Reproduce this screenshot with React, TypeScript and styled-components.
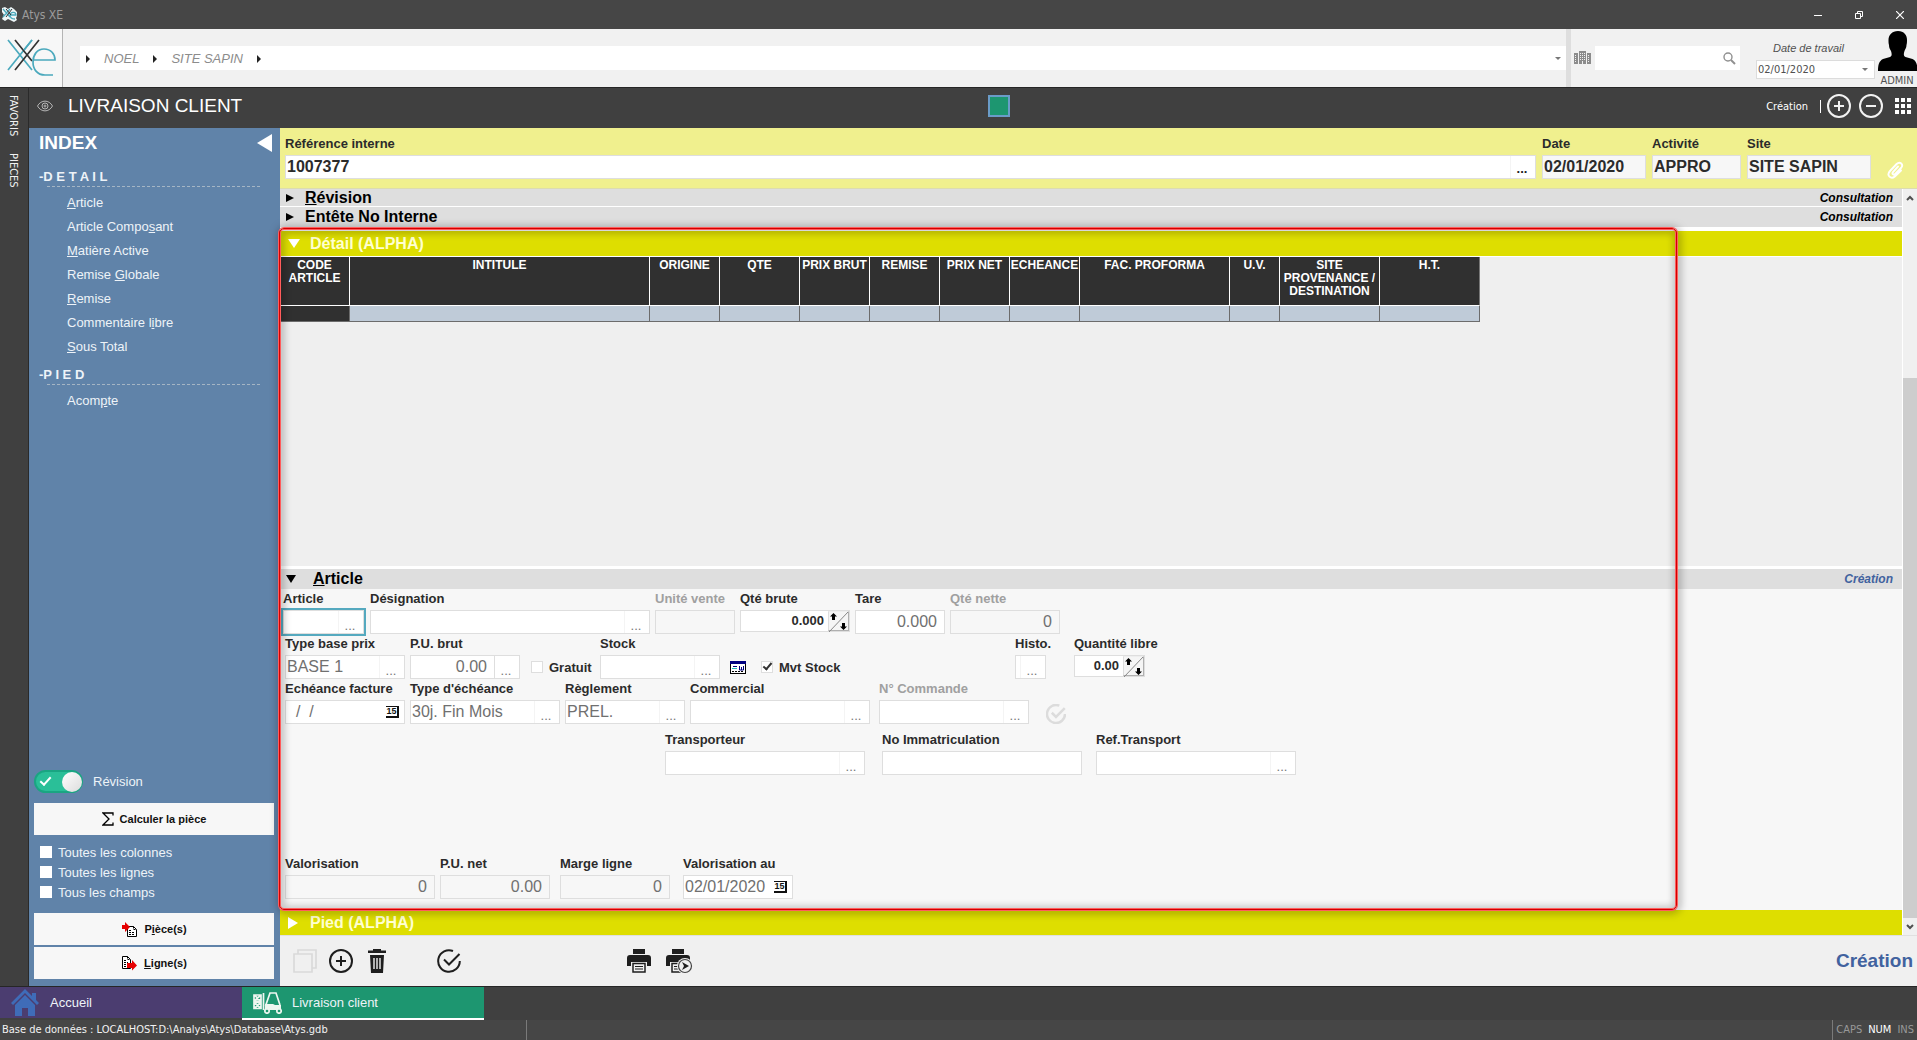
import React, { useId } from "react";
import styled, { createGlobalStyle, css } from "styled-components";

const sans = `"Liberation Sans", Arial, sans-serif`;
const ui = `"DejaVu Sans Condensed", "DejaVu Sans", Tahoma, sans-serif`;

const Global = createGlobalStyle`
  *, *::before, *::after { box-sizing: border-box; }
  body { margin: 0; background: #404040; font-family: ${sans}; font-size: 13px; color: #2b2b2b; }
  button, input, select { font: inherit; color: inherit; margin: 0; padding: 0; border: 0; background: none; border-radius: 0; outline: 0; }
  svg { display: block; flex: none; }
`;

const Shell = styled.div`
  display: flex;
  flex-direction: column;
  min-height: 100vh;
`;

/* ---------- window title ---------- */
const TitleBar = styled.header`
  display: flex;
  align-items: center;
  height: 29px;
  padding: 0 7px 0 2px;
  background: #464646;
  color: #9b9b9b;
  font: 12px ${ui};
`;
const AppName = styled.span`
  flex: 1;
  padding-left: 4px;
`;
const WindowButtons = styled.div`
  display: flex;
  gap: 21px;
`;
const IconButton = styled.button<{ $w?: number; $h?: number }>`
  display: flex;
  align-items: center;
  justify-content: center;
  width: ${(p) => p.$w ?? 24}px;
  height: ${(p) => p.$h ?? p.$w ?? 24}px;
  flex: none;
`;

/* ---------- top toolbar ---------- */
const TopBar = styled.div`
  display: flex;
  align-items: center;
  height: 58px;
  background: #f1f1f1;
`;
const LogoBox = styled.div`
  width: 63px;
  height: 58px;
  padding: 8px 0 0 6px;
  background: #f7f7f7;
  border-right: 1px solid #b4b4b4;
`;
const Crumbs = styled.nav`
  display: flex;
  align-items: center;
  flex: 1;
  height: 24px;
  margin-left: 17px;
  padding: 1px 4px 0 6px;
  gap: 14px;
  background: #fff;
  color: #8c8c8c;
  font-style: italic;
`;
const CrumbLink = styled.a`
  color: inherit;
  text-decoration: none;
`;
const Spacer = styled.span`
  flex: 1;
`;
const Arrow = styled.span<{ $dir: "right" | "down" | "left"; $size: number; $long: number; $color: string }>`
  flex: none;
  width: 0;
  height: 0;
  ${(p) =>
    p.$dir === "down"
      ? css`
          border-left: ${p.$size}px solid transparent;
          border-right: ${p.$size}px solid transparent;
          border-top: ${p.$long}px solid ${p.$color};
        `
      : css`
          border-top: ${p.$size}px solid transparent;
          border-bottom: ${p.$size}px solid transparent;
          ${p.$dir === "right" ? "border-left" : "border-right"}: ${p.$long}px solid ${p.$color};
        `}
`;
const TopDivider = styled.div`
  width: 5px;
  height: 58px;
  background: #dedede;
`;
const SearchBox = styled.div`
  display: flex;
  align-items: center;
  width: 145px;
  height: 24px;
  margin-left: 2px;
  padding-right: 4px;
  background: #fff;
`;
const PlainInput = styled.input`
  flex: 1;
  min-width: 0;
  height: 100%;
`;
const WorkDate = styled.div`
  display: flex;
  flex-direction: column;
  width: 119px;
  margin-left: 16px;
`;
const WorkDateLabel = styled.label`
  padding: 2px 14px 0 0;
  color: #505050;
  font-size: 11px;
  font-style: italic;
  line-height: 16px;
  text-align: center;
`;
const SelectWrap = styled.span`
  display: grid;
  grid-template-columns: 1fr 12px;
  align-items: center;
  height: 19px;
  margin-top: 4px;
  background: #fff;
  border: 1px solid #dcdcdc;
`;
const DateSelect = styled.select`
  grid-area: 1 / 1 / 2 / 3;
  appearance: none;
  height: 17px;
  padding-left: 1px;
  color: #505050;
  font: 11px ${ui};
`;
const SelectArrow = styled(Arrow)`
  grid-area: 1 / 2;
`;
const UserBox = styled.button`
  display: flex;
  flex-direction: column;
  align-items: center;
  width: 40px;
  height: 58px;
  margin-left: 2px;
  padding-top: 2px;
  color: #505050;
  font: 11px/14px ${ui};
`;
const UserName = styled.span`
  padding-top: 3px;
`;

/* ---------- body ---------- */
const Body = styled.div`
  display: flex;
  flex: 1;
`;
const Rail = styled.nav`
  display: flex;
  flex-direction: column;
  gap: 17px;
  width: 29px;
  padding: 7px 0 0 6px;
  background: #404040;
  border-top: 1px solid #262626;
  border-right: 1px solid #2a2a2a;
`;
const RailButton = styled.button`
  width: 14px;
  color: #f2f2f2;
  font: 11px/14px ${ui};
  writing-mode: vertical-rl;
  text-align: left;
`;
const Column = styled.div`
  display: flex;
  flex-direction: column;
  flex: 1;
  min-width: 0;
`;
const PageHead = styled.div`
  display: grid;
  grid-template-columns: 1fr auto 1fr;
  align-items: center;
  height: 41px;
  padding: 0 6px 4px 8px;
  background: #404040;
  border-top: 1px solid #262626;
  color: #fff;
`;
const PageTitle = styled.h1`
  display: flex;
  align-items: center;
  gap: 15px;
  margin: 0;
  font-size: 19px;
  font-weight: 400;
`;
const ColorChip = styled.button`
  width: 22px;
  height: 22px;
  margin-left: 50px;
  background: #1d9670;
  border: 2px solid #6a9cc8;
`;
const PageActions = styled.div`
  display: flex;
  align-items: center;
  justify-content: flex-end;
  font: 11px ${ui};
`;
const Bar = styled.span`
  width: 1px;
  height: 13px;
  margin: 0 6px 0 12px;
  background: #fff;
`;
const RoundGroup = styled.div`
  display: flex;
  gap: 8px;
  padding-right: 12px;
`;
const Work = styled.div`
  display: flex;
  flex: 1;
`;

/* ---------- index panel ---------- */
const Side = styled.aside`
  display: flex;
  flex-direction: column;
  width: 251px;
  padding: 5px 6px 7px 5px;
  background: #6083a9;
  color: #eef3f8;
`;
const SideTitle = styled.div`
  display: flex;
  align-items: center;
  justify-content: space-between;
  height: 20px;
  padding: 0 2px 0 5px;
`;
const SideHeading = styled.h2`
  margin: 0;
  color: #fff;
  font-size: 19px;
`;
const Group = styled.section`
  padding: 8px 14px 0 5px;
  &:first-of-type { padding-top: 16px; }
`;
const GroupTitle = styled.h3`
  height: 18px;
  margin: 0 0 0 8px;
  border-bottom: 1px dashed #a5b5c4;
  font-size: 13px;
  line-height: 15px;
  text-indent: -8px;
  white-space: nowrap;
`;
const Links = styled.ul`
  margin: 0;
  padding: 4px 0 0 28px;
  list-style: none;
`;
const IndexLink = styled.a`
  display: block;
  color: inherit;
  line-height: 24px;
  text-decoration: none;
`;
const SideOptions = styled.div`
  display: flex;
  flex-direction: column;
  margin-top: auto;
`;
const ToggleLabel = styled.label`
  display: flex;
  align-items: center;
  gap: 10px;
  margin-bottom: 10px;
`;
const Toggle = styled.input.attrs({ type: "checkbox" })`
  position: relative;
  appearance: none;
  width: 49px;
  height: 23px;
  background: #2abf98;
  border: 2px solid #1aa582;
  border-radius: 12px;
  &::before {
    content: "";
    position: absolute;
    top: 0;
    right: -1px;
    width: 20px;
    height: 20px;
    border-radius: 50%;
    background: linear-gradient(135deg, #ffffff, #dcdcdc);
  }
  &::after {
    content: "";
    position: absolute;
    left: 4px;
    top: 5px;
    width: 11px;
    height: 6px;
    border: solid #fff;
    border-width: 0 0 2px 2px;
    rotate: -48deg;
  }
`;
const SideButton = styled.button`
  display: flex;
  align-items: center;
  justify-content: center;
  gap: 6px;
  height: 32px;
  background: #f7f7f7;
  color: #111;
  font-size: 11px;
  font-weight: 700;
  & + & { margin-top: 2px; }
`;
const Checks = styled.div`
  padding: 7px 0 11px 6px;
`;
const CheckLine = styled.label<{ $bold?: boolean }>`
  display: flex;
  align-items: center;
  gap: 6px;
  height: 20px;
  font-weight: ${(p) => (p.$bold ? 700 : 400)};
`;
const Check = styled.input.attrs({ type: "checkbox" })<{ $line?: string }>`
  position: relative;
  appearance: none;
  width: 12px;
  height: 12px;
  background: #fff;
  border: 1px solid ${(p) => p.$line ?? "#fff"};
  &:checked::after {
    content: "";
    position: absolute;
    left: 1px;
    top: 1px;
    width: 9px;
    height: 5px;
    border: solid #333;
    border-width: 0 0 2px 2px;
    rotate: -50deg;
  }
`;

/* ---------- document ---------- */
const Doc = styled.main`
  display: flex;
  flex-direction: column;
  flex: 1;
  min-width: 0;
  background: #f0f0f0;
`;
const KeyBar = styled.div`
  display: flex;
  align-items: flex-end;
  gap: 6px;
  height: 61px;
  padding: 0 12px 9px 5px;
  background: #f0f08e;
  border-bottom: 1px solid #dcdcb0;
`;
const Clip = styled.div`
  margin-left: 9px;
`;

const FieldWrap = styled.div<{ $w?: number; $before?: number }>`
  ${(p) => (p.$w ? `width: ${p.$w}px; flex: none;` : "flex: 1;")}
  margin-left: ${(p) => p.$before ?? 0}px;
`;
const FieldLabel = styled.label<{ $off?: boolean }>`
  display: block;
  height: 21px;
  line-height: 20px;
  font-weight: 700;
  white-space: nowrap;
  color: ${(p) => (p.$off ? "#a0a0a0" : "#2b2b2b")};
`;
const Box = styled.div<{ $grey?: boolean; $focus?: boolean; $h?: number }>`
  display: flex;
  height: ${(p) => p.$h ?? 24}px;
  background: ${(p) => (p.$grey ? "#f7f7f7" : "#fff")};
  border: 1px solid #dedede;
  ${(p) => p.$focus && "box-shadow: 0 0 0 2px #55a9bf;"}
`;
const Value = styled.input<{ $num?: boolean; $strong?: "key" | "spin" }>`
  flex: 1;
  min-width: 0;
  height: 100%;
  padding: 0 ${(p) => (p.$strong === "spin" ? 4 : p.$num ? 7 : 0)}px 1px 1px;
  color: ${(p) => (p.$strong ? "#2b2b2b" : "#707070")};
  font-size: ${(p) => (p.$strong === "spin" ? 13 : 16)}px;
  font-weight: ${(p) => (p.$strong ? 700 : 400)};
  text-align: ${(p) => (p.$num ? "right" : "left")};
`;
const More = styled.button<{ $line?: string; $strong?: boolean }>`
  width: 25px;
  height: 100%;
  flex: none;
  padding: ${(p) => (p.$strong ? 4 : 7)}px 2px 0 0;
  border-left: 1px solid ${(p) => p.$line ?? "#f4f4f4"};
  color: ${(p) => (p.$strong ? "#222" : "#777")};
  font-size: 13px;
  font-weight: ${(p) => (p.$strong ? 700 : 400)};
  line-height: 14px;
  text-align: center;
`;
const DayButton = styled.button`
  display: flex;
  align-items: center;
  justify-content: center;
  width: 23px;
  flex: none;
`;
const DayIcon = styled.span`
  width: 13px;
  height: 12px;
  border: solid #111;
  border-width: 1px 2px 2px 0;
  background: #fff;
  color: #111;
  font: 700 9px/9px ${sans};
  text-align: center;
`;
const SpinButton = styled.button`
  display: flex;
  width: 21px;
  flex: none;
  background: #f5f5f5;
  border: 1px solid #b0b0b0;
  border-top-color: #eee;
  border-left-color: #ddd;
`;

const Scroller = styled.div`
  display: flex;
  flex: 1;
`;
const Sheet = styled.div`
  display: flex;
  flex-direction: column;
  flex: 1;
  min-width: 0;
  background: #fff;
`;
const GreyBar = styled.div<{ $first?: boolean }>`
  display: flex;
  align-items: center;
  height: ${(p) => (p.$first ? 18 : 20)}px;
  padding: 0 9px 0 6px;
  background: #dedede;
  border-bottom: ${(p) => (p.$first ? "1px solid #fff" : "0")};
`;
const BarToggle = styled.button<{ $gap: number }>`
  display: flex;
  align-items: center;
  gap: ${(p) => p.$gap}px;
  color: #000;
  font-size: 16px;
  font-weight: 700;
  line-height: 18px;
`;
const BarState = styled.span<{ $color?: string }>`
  margin-left: auto;
  color: ${(p) => p.$color ?? "#000"};
  font-size: 12px;
  font-style: italic;
  font-weight: 700;
  line-height: 16px;
`;
const YellowBar = styled.button`
  display: flex;
  align-items: center;
  width: 100%;
  height: 25px;
  padding-left: 8px;
  background: #dede00;
  color: #ffffd0;
  font-size: 16px;
  font-weight: 700;
`;
const ArrowSlot = styled.span`
  display: flex;
  width: 22px;
`;
const Marked = styled.div`
  position: relative;
  display: flex;
  flex-direction: column;
  flex: 1;
  margin-top: 4px;
`;
const RedFrame = styled.div`
  position: absolute;
  inset: -3px 225px 0 -1px;
  z-index: 2;
  border: 1px solid #d00000;
  border-radius: 5px;
  box-shadow: 0 0 0 1px #ff5c5c, inset 0 0 0 1px #ff5c5c;
  filter: drop-shadow(1px 1px 4px rgba(0, 0, 0, 0.6));
  pointer-events: none;
`;
const GridArea = styled.div`
  flex: 1;
  background: #efefef;
  border-top: 1px solid #fff;
  border-bottom: 3px solid #fff;
`;
const Lines = styled.table`
  width: 1200px;
  table-layout: fixed;
  border-collapse: separate;
  border-spacing: 0;
`;
const Th = styled.th`
  height: 49px;
  padding: 2px 0 0;
  vertical-align: top;
  background: #303030;
  border-right: 1px solid #fff;
  border-bottom: 1px solid #fff;
  color: #fff;
  font-size: 12px;
  line-height: 13px;
  &:last-child { border-right-color: #777; }
`;
const Td = styled.td`
  height: 16px;
  padding: 0;
  background: #bfcbd8;
  border-right: 1px solid #6c6c6c;
  border-bottom: 1px solid #6c6c6c;
  &:first-child { background: #303030; }
`;
const Form = styled.form`
  padding-bottom: 11px;
  background: #f7f7f7;
`;
const Row = styled.div<{ $pad?: number; $top?: number }>`
  display: flex;
  align-items: flex-start;
  padding-left: ${(p) => p.$pad ?? 5}px;
  padding-top: ${(p) => p.$top ?? 0}px;
`;
const Inline = styled.div<{ $before: number; $w?: number; $low?: boolean }>`
  margin-left: ${(p) => p.$before}px;
  ${(p) => p.$w && `width: ${p.$w}px;`}
  height: 45px;
  padding-top: 21px;
  display: flex;
  align-items: ${(p) => (p.$low ? "flex-end" : "center")};
`;
const ScrollTrack = styled.div`
  display: flex;
  flex-direction: column;
  align-items: center;
  width: 15px;
  background: #f0f0f0;
  border-left: 1px solid #fff;
`;
const ScrollThumb = styled.div`
  width: 14px;
  flex: 540;
  background: #cdcdcd;
`;
const ScrollGap = styled.div`
  flex: 171;
`;

const Actions = styled.footer`
  display: flex;
  align-items: center;
  gap: 12px;
  height: 51px;
  padding: 0 4px 0 13px;
  border-top: 1px solid #e0e0e0;
`;
const ActionSet = styled.div<{ $before: number; $gap: number }>`
  display: flex;
  gap: ${(p) => p.$gap}px;
  margin-left: ${(p) => p.$before}px;
`;
const Mode = styled.strong`
  margin-left: auto;
  color: #41629f;
  font-size: 19px;
`;

/* ---------- bottom ---------- */
const TaskBar = styled.nav`
  display: flex;
  height: 34px;
  background: #404040;
  border-top: 1px solid #262626;
`;
const Task = styled.button<{ $color: string; $line: string; $gap: number }>`
  display: flex;
  align-items: center;
  gap: ${(p) => p.$gap}px;
  width: 242px;
  padding-left: 11px;
  background: ${(p) => p.$color};
  border-bottom: 2px solid ${(p) => p.$line};
  color: #eef3f8;
`;
const Status = styled.footer`
  display: flex;
  height: 20px;
  background: #464646;
  color: #f2f2f2;
  font: 11px/20px ${ui};
`;
const StatusText = styled.span`
  width: 527px;
  padding-left: 2px;
  border-right: 1px solid #7a7a7a;
`;
const Keys = styled.span`
  display: flex;
  gap: 6px;
  margin-left: auto;
  padding: 0 3px;
  border-left: 1px solid #7a7a7a;
`;
const Key = styled.span<{ $on?: boolean }>`
  color: ${(p) => (p.$on ? "#fff" : "#999")};
`;

/* ---------- icons ---------- */
const XeLogo = () => (
  <svg width="52" height="42" viewBox="0 0 52 42" fill="none" strokeWidth="1.700">
    <path d="M2 3l24 30M26 3L2 33" stroke="#4ba9bd" />
    <path d="M9 3l17 21M33 3L9 33" stroke="#333" />
    <path d="M26 3l-8 10" stroke="#4ba9bd" />
    <path d="M27 23h22c0-6-4-11-11-11s-11 6-11 13 4 13 12 13h8" stroke="#4ba9bd" />
  </svg>
);
const TinyLogo = () => (
  <svg width="16" height="15" viewBox="0 0 16 15">
    <path d="M0 1l3-1 3 2 3-2 3 2 3 3v4l-1 2 1 2-3 2-4-2-2-1-3 2-3-2 2-4-2-3z" fill="#eef6f8" />
    <path d="M1 2l7 8M8 2L1 10M8 8h6c0-3-5-4-6 0 0 4 3 4 5 4" stroke="#4ba9bd" strokeWidth="1.3" fill="none" />
    <path d="M4 2l5 6M10 2L4 10" stroke="#333" fill="none" />
  </svg>
);
const Buildings = () => (
  <svg width="17" height="14" viewBox="0 0 17 14" fill="#8c8c8c">
    <path fillRule="evenodd" d="M0 2h4v11H0zM5 0h7v13H5zM13 2h4v11h-4zM1 4v1h1V4zm0 2v1h1V6zm0 2v1h1V8zm0 2v1h1v-1zM6 2v1h1V2zm2 0v1h1V2zm2 0v1h1V2zM6 4v1h1V4zm2 0v1h1V4zm2 0v1h1V4zM6 6v1h1V6zm2 0v1h1V6zm2 0v1h1V6zM6 8v1h1V8zm2 0v1h1V8zm2 0v1h1V8zm-2 2v3h1v-3zm6-6v1h1V4zm0 2v1h1V6zm0 2v1h1V8zm0 2v1h1v-1z" />
  </svg>
);
const Magnifier = () => (
  <svg width="13" height="13" viewBox="0 0 13 13" fill="none" stroke="#909090">
    <circle cx="5" cy="5" r="4" strokeWidth="1.4" />
    <path d="M8 8l4 4" strokeWidth="2" />
  </svg>
);
const Person = () => (
  <svg width="39" height="40" viewBox="0 0 39 40">
    <path d="M20 0c6 0 9 4 9 9 0 2 0 3-.5 5 0 3-1.500 4-2 6-1 3-1 5 1 6l7 2c4 2 5 6 5 12H0c0-6 1-10 5-12l7-2c2-1 2-3 1-6-1-2-2-3-2-6-.5-2-.5-3-.5-5 0-5 3.500-9 9.500-9z" />
  </svg>
);
const Eye = () => (
  <svg width="16" height="12" viewBox="0 0 16 12" fill="none" stroke="#b5b5b5">
    <path d="M.5 6C4-.5 12-.5 15.500 6 12 12.500 4 12.500.5 6z" />
    <circle cx="8" cy="6" r="3" />
    <circle cx="8" cy="6" r="1" />
  </svg>
);
const Circled = ({ plus, color }: { plus?: boolean; color: string }) => (
  <svg width="24" height="24" viewBox="0 0 24 24" fill="none" stroke={color} strokeWidth="2">
    <circle cx="12" cy="12" r="11" />
    <path d={plus ? "M7 12h10M12 7v10" : "M7 12h10"} />
  </svg>
);
const NineDots = () => (
  <svg width="16" height="16" viewBox="0 0 16 16" fill="#fff">
    {[0, 6, 12].map((y) => [0, 6, 12].map((x) => <rect key={`${x}-${y}`} x={x} y={y} width="4" height="4" />))}
  </svg>
);
const Paperclip = () => (
  <svg width="17" height="18" viewBox="0 0 17 18" fill="none" stroke="#fff" strokeWidth="1.900" strokeLinecap="round">
    <path d="M11 5.500l-5 5.500c-1.500 2 .7 3.500 2.200 2l5.800-6c3-3.500-1-7.200-4.400-4L3 10c-4 4.500 1 8.800 4.800 5.500l6.200-6" />
  </svg>
);
const Sigma = () => (
  <svg width="12" height="14" viewBox="0 0 12 14" fill="none" stroke="#000" strokeWidth="1.300">
    <path d="M11 3.500V1H1l6 6-6 6h10v-2.500" />
  </svg>
);
const PieceIcon = () => (
  <svg width="17" height="15" viewBox="0 0 17 15">
    <path d="M6.500 4.500h6l3 3v7h-9z" fill="#fff" stroke="#000" />
    <path d="M12.500 4.500v3h3M8 8.500h3M8 10.500h6M8 12.500h6" stroke="#000" fill="none" strokeDasharray="2 1" />
    <path d="M1 3h3V0l5 5-5 5V7H1z" fill="#e60000" />
  </svg>
);
const LineIcon = () => (
  <svg width="17" height="15" viewBox="0 0 17 15">
    <path d="M1.500.5h5l3 3v9h-8z" fill="#fff" stroke="#000" />
    <path d="M6.500.5v3h3M3 4.500h2M3 6.500h4M3 8.500h3M3 10.500h3" stroke="#000" fill="none" strokeDasharray="2 1" />
    <path d="M6 7h5V4l5 5.500-5 5V12H6z" fill="#e60000" />
  </svg>
);
const Spin = () => (
  <svg width="19" height="20" viewBox="0 0 19 20">
    <path d="M0 20L19 0" stroke="#888" />
    <path d="M4.500 1L8 4.500H6V8H3V4.500H1zM14.500 18L11 14.500h2V11h3v3.500h2z" fill="#000" />
  </svg>
);
const StockCard = () => (
  <svg width="16" height="13" viewBox="0 0 16 13">
    <rect x=".5" y=".5" width="15" height="12" fill="#fff" stroke="#000" />
    <path d="M0 0h16v3H0z" fill="#000080" />
    <path d="M3 5.500h4M9.500 5v4h4V5M11.500 6v3" stroke="#000080" fill="none" />
    <path d="M2 7.500h5" stroke="#2bb" />
    <path d="M2 10.500h12" stroke="#000" strokeDasharray="2 1" />
  </svg>
);
const CheckCircle = ({ size, color, width }: { size: number; color: string; width: number }) => (
  <svg width={size} height={size} viewBox="0 0 24 24" fill="none" stroke={color} strokeWidth={width}>
    <path d="M16 2A10.800 10.800 0 1 0 22.800 12" />
    <path d="M7 10.500l5 5L22.500 5" />
  </svg>
);
const CopyIcon = () => (
  <svg width="24" height="24" viewBox="0 0 24 24" fill="none" stroke="#d9d9d9" strokeWidth="1.600">
    <path d="M1 5h18v18H1zM5 5V1h18v18h-4" />
  </svg>
);
const Trash = () => (
  <svg width="18" height="24" viewBox="0 0 18 24" fill="#1e1e1e">
    <path d="M0 1.500h5V0h8v1.500h5V4H0zM2 6h14l-1 18H3z" />
    <path d="M6 9v11M9 9v11M12 9v11" stroke="#f0f0f0" strokeWidth="1.400" />
  </svg>
);
const Printer = ({ next }: { next?: boolean }) => (
  <svg width={next ? 27 : 24} height="26" viewBox={next ? "0 0 27 26" : "0 0 24 26"}>
    <path d="M6 1h12v5H6zM0 10q0-3 3-3h18q3 0 3 3v8h-4v-4H4v4H0z" fill="#1e1e1e" />
    <path d="M6 15.500h12V24H6z" fill="#f0f0f0" stroke="#1e1e1e" strokeWidth="1.500" />
    <path d="M8 18.500h8M8 21h8" stroke="#1e1e1e" />
    {next && <circle cx="19" cy="18" r="8" fill="#f0f0f0" />}
    {next && <circle cx="19" cy="18" r="6.500" fill="#f0f0f0" stroke="#444" strokeWidth="1.200" />}
    {next && <path d="M16 14l7 4-7 4 2-4z" fill="#1e1e1e" />}
  </svg>
);
const House = () => (
  <svg width="28" height="27" viewBox="0 0 28 27" fill="#3f6cb8">
    <path d="M14 0L0 14l2 2L14 4l12 12 2-2-3-3V4h-4v3z" />
    <path d="M14 6L4 16v11h7v-8h6v8h7V16z" />
  </svg>
);
const Forklift = () => (
  <svg width="29" height="22" viewBox="0 0 29 22" fill="none" stroke="#eef6f0" strokeWidth="1.700">
    <path d="M1 3h7v6H1zM1 10.500h7v6H1zM1 3l7 6M8 3L1 9M1 10.500l7 6M8 10.500l-7 6M10.500 1v17" />
    <path d="M12.500 14L17 1h6l4 12" />
    <path d="M12 12h8l2 1h6v5H12z" fill="#eef6f0" stroke="none" />
    <circle cx="14" cy="19" r="2.200" fill="#1d9670" />
    <circle cx="26" cy="19" r="2.200" fill="#1d9670" />
  </svg>
);
const Chevron = ({ up }: { up?: boolean }) => (
  <svg width="8" height="6" viewBox="0 0 8 6" fill="none" stroke="#505050" strokeWidth="2">
    <path d={up ? "M1 5l3-3 3 3" : "M1 1l3 3 3-3"} />
  </svg>
);

/* ---------- parts ---------- */
// "&" marks the letter that is the keyboard shortcut.
const Mnemonic = ({ text }: { text: string }) => {
  const at = text.indexOf("&");
  if (at < 0) return <span>{text}</span>;
  return (
    <span>
      {text.slice(0, at)}
      <u>{text[at + 1]}</u>
      {text.slice(at + 2)}
    </span>
  );
};

type FieldProps = {
  label: string;
  w?: number;
  before?: number;
  value?: string;
  num?: boolean;
  off?: boolean;
  grey?: boolean;
  focus?: boolean;
  big?: boolean;
  tool?: "more" | "split" | "day" | "spin" | "only";
};
const Field = ({ label, w, before, value = "", num, off, grey, focus, big, tool }: FieldProps) => {
  const id = useId();
  return (
    <FieldWrap $w={w} $before={before}>
      <FieldLabel htmlFor={id} $off={off}>
        {label}
      </FieldLabel>
      <Box $grey={grey} $focus={focus} $h={tool === "spin" ? 22 : 24}>
        {tool !== "only" && (
          <Value id={id} defaultValue={value} $num={num || tool === "spin"} $strong={big ? "key" : tool === "spin" ? "spin" : undefined} />
        )}
        {tool === "only" && <Spacer />}
        {(tool === "more" || tool === "split" || tool === "only") && (
          <More
            type="button"
            id={tool === "only" ? id : undefined}
            aria-label={`Choisir ${label}`}
            $strong={big}
            $line={tool === "split" ? "#dedede" : undefined}
          >
            ...
          </More>
        )}
        {tool === "day" && (
          <DayButton type="button" aria-label={`Calendrier ${label}`}>
            <DayIcon>15</DayIcon>
          </DayButton>
        )}
        {tool === "spin" && (
          <SpinButton type="button" aria-label={`Ajuster ${label}`}>
            <Spin />
          </SpinButton>
        )}
      </Box>
    </FieldWrap>
  );
};

const groups = [
  {
    title: "D E T A I L",
    items: ["&Article", "Article Compo&sant", "&Matière Active", "Remise &Globale", "&Remise", "Commentaire l&ibre", "&Sous Total"],
  },
  { title: "P I E D", items: ["Acom&pte"] },
];

const columns: [string, number][] = [
  ["CODE ARTICLE", 70],
  ["INTITULE", 300],
  ["ORIGINE", 70],
  ["QTE", 80],
  ["PRIX BRUT", 70],
  ["REMISE", 70],
  ["PRIX NET", 70],
  ["ECHEANCE", 70],
  ["FAC. PROFORMA", 150],
  ["U.V.", 50],
  ["SITE PROVENANCE / DESTINATION", 100],
  ["H.T.", 100],
];

const IndexPanel = () => (
  <Side>
    <SideTitle>
      <SideHeading>INDEX</SideHeading>
      <IconButton $w={15} $h={18} aria-label="Replier l'index">
        <Arrow $dir="left" $size={9} $long={15} $color="#fff" />
      </IconButton>
    </SideTitle>
    {groups.map((g) => (
      <Group key={g.title}>
        <GroupTitle>-{g.title}</GroupTitle>
        <Links>
          {g.items.map((item) => (
            <li key={item}>
              <IndexLink href="#">
                <Mnemonic text={item} />
              </IndexLink>
            </li>
          ))}
        </Links>
      </Group>
    ))}
    <SideOptions>
      <ToggleLabel>
        <Toggle defaultChecked />
        Révision
      </ToggleLabel>
      <SideButton>
        <Sigma />
        Calculer la pièce
      </SideButton>
      <Checks>
        {["Toutes les colonnes", "Toutes les lignes", "Tous les champs"].map((t) => (
          <CheckLine key={t}>
            <Check />
            {t}
          </CheckLine>
        ))}
      </Checks>
      <SideButton>
        <PieceIcon />
        <Mnemonic text="P&ièce(s)" />
      </SideButton>
      <SideButton>
        <LineIcon />
        <Mnemonic text="&Ligne(s)" />
      </SideButton>
    </SideOptions>
  </Side>
);

const ArticleForm = () => (
  <Form>
    <Row $pad={3}>
      <Field label="Article" w={81} focus tool="more" />
      <Field label="Désignation" w={280} before={6} tool="more" />
      <Field label="Unité vente" w={80} before={5} off grey />
      <Field label="Qté brute" w={110} before={5} value="0.000" tool="spin" />
      <Field label="Tare" w={90} before={5} value="0.000" num />
      <Field label="Qté nette" w={110} before={5} value="0" num off grey />
    </Row>
    <Row>
      <Field label="Type base prix" w={120} value="BASE 1" tool="more" />
      <Field label="P.U. brut" w={110} before={5} value="0.00" num tool="split" />
      <Inline $before={11} $w={69}>
        <CheckLine $bold>
          <Check $line="#dedede" />
          Gratuit
        </CheckLine>
      </Inline>
      <Field label="Stock" w={120} tool="more" />
      <Inline $before={10} $w={31}>
        <IconButton type="button" $w={16} aria-label="Fiche stock">
          <StockCard />
        </IconButton>
      </Inline>
      <Inline $before={0} $w={244}>
        <CheckLine $bold>
          <Check $line="#dedede" defaultChecked />
          Mvt Stock
        </CheckLine>
      </Inline>
      <Field label="Histo." w={31} before={10} tool="only" />
      <Field label="Quantité libre" w={71} before={28} value="0.00" tool="spin" />
    </Row>
    <Row>
      <Field label="Echéance facture" w={120} value="  /  /" tool="day" />
      <Field label="Type d'échéance" w={150} before={5} value="30j. Fin Mois" tool="more" />
      <Field label="Règlement" w={120} before={5} value="PREL." tool="more" />
      <Field label="Commercial" w={180} before={5} tool="more" />
      <Field label="N° Commande" w={150} before={9} off tool="more" />
      <Inline $before={17} $low>
        <IconButton type="button" $w={20} aria-label="Valider la commande">
          <CheckCircle size={20} color="#dcdcdc" width={3} />
        </IconButton>
      </Inline>
    </Row>
    <Row $pad={385} $top={6}>
      <Field label="Transporteur" w={200} tool="more" />
      <Field label="No Immatriculation" w={200} before={17} />
      <Field label="Ref.Transport" w={200} before={14} tool="more" />
    </Row>
    <Row $top={79}>
      <Field label="Valorisation" w={150} value="0" num grey />
      <Field label="P.U. net" w={110} before={5} value="0.00" num grey />
      <Field label="Marge ligne" w={110} before={10} value="0" num grey />
      <Field label="Valorisation au" w={110} before={13} value="02/01/2020" tool="day" />
    </Row>
  </Form>
);

export default function App() {
  return (
    <Shell>
      <Global />
      <TitleBar>
        <TinyLogo />
        <AppName>Atys XE</AppName>
        <WindowButtons>
          <IconButton $w={20} aria-label="Réduire">
            <svg width="8" height="8" viewBox="0 0 8 8" stroke="#fff"><path d="M0 4.500h8" /></svg>
          </IconButton>
          <IconButton $w={20} aria-label="Restaurer">
            <svg width="8" height="8" viewBox="0 0 8 8" stroke="#fff" fill="none"><path d="M.5 2.500h5v5h-5zM2.500 2.500v-2h5v5h-2" /></svg>
          </IconButton>
          <IconButton $w={20} aria-label="Fermer">
            <svg width="8" height="8" viewBox="0 0 8 8" stroke="#fff" strokeWidth="1.200"><path d="M0 0l8 8M8 0L0 8" /></svg>
          </IconButton>
        </WindowButtons>
      </TitleBar>

      <TopBar>
        <LogoBox>
          <XeLogo />
        </LogoBox>
        <Crumbs>
          <Arrow $dir="right" $size={4} $long={4} $color="#222" />
          <CrumbLink href="#">NOEL</CrumbLink>
          <Arrow $dir="right" $size={4} $long={4} $color="#222" />
          <CrumbLink href="#">SITE SAPIN</CrumbLink>
          <Arrow $dir="right" $size={4} $long={4} $color="#222" />
          <Spacer />
          <IconButton $w={8} $h={20} aria-label="Historique">
            <Arrow $dir="down" $size={3} $long={3} $color="#777" />
          </IconButton>
        </Crumbs>
        <TopDivider />
        <IconButton $w={22} aria-label="Sites">
          <Buildings />
        </IconButton>
        <SearchBox>
          <PlainInput aria-label="Rechercher" />
          <Magnifier />
        </SearchBox>
        <WorkDate>
          <WorkDateLabel htmlFor="work-date">Date de travail</WorkDateLabel>
          <SelectWrap>
            <DateSelect id="work-date">
              <option>02/01/2020</option>
            </DateSelect>
            <SelectArrow $dir="down" $size={3} $long={3} $color="#777" />
          </SelectWrap>
        </WorkDate>
        <UserBox>
          <Person />
          <UserName>ADMIN</UserName>
        </UserBox>
      </TopBar>

      <Body>
        <Rail>
          <RailButton>FAVORIS</RailButton>
          <RailButton>PIECES</RailButton>
        </Rail>
        <Column>
          <PageHead>
            <PageTitle>
              <Eye />
              LIVRAISON CLIENT
            </PageTitle>
            <ColorChip aria-label="Couleur de la pièce" />
            <PageActions>
              Création
              <Bar />
              <RoundGroup>
                <IconButton aria-label="Ajouter">
                  <Circled plus color="#f2f2f2" />
                </IconButton>
                <IconButton aria-label="Retirer">
                  <Circled color="#f2f2f2" />
                </IconButton>
              </RoundGroup>
              <IconButton $w={16} aria-label="Applications">
                <NineDots />
              </IconButton>
            </PageActions>
          </PageHead>

          <Work>
            <IndexPanel />
            <Doc>
              <KeyBar>
                <Field label="Référence interne" value="1007377" big tool="more" />
                <Field label="Date" w={104} value="02/01/2020" big grey />
                <Field label="Activité" w={89} value="APPRO" big grey />
                <Field label="Site" w={124} value="SITE SAPIN" big grey />
                <Clip>
                  <IconButton $w={19} aria-label="Pièces jointes">
                    <Paperclip />
                  </IconButton>
                </Clip>
              </KeyBar>

              <Scroller>
                <Sheet>
                  <GreyBar $first>
                    <BarToggle $gap={11}>
                      <Arrow $dir="right" $size={4} $long={8} $color="#000" />
                      <Mnemonic text="&Révision" />
                    </BarToggle>
                    <BarState>Consultation</BarState>
                  </GreyBar>
                  <GreyBar>
                    <BarToggle $gap={11}>
                      <Arrow $dir="right" $size={4} $long={8} $color="#000" />
                      Entête No Interne
                    </BarToggle>
                    <BarState>Consultation</BarState>
                  </GreyBar>
                  <Marked>
                    <RedFrame />
                    <YellowBar>
                      <ArrowSlot>
                        <Arrow $dir="down" $size={6} $long={9} $color="#fff" />
                      </ArrowSlot>
                      Détail (ALPHA)
                    </YellowBar>
                    <GridArea>
                      <Lines>
                        <colgroup>
                          {columns.map(([name, w]) => (
                            <col key={name} width={w} />
                          ))}
                        </colgroup>
                        <thead>
                          <tr>
                            {columns.map(([name]) => (
                              <Th key={name}>{name}</Th>
                            ))}
                          </tr>
                        </thead>
                        <tbody>
                          <tr>
                            {columns.map(([name]) => (
                              <Td key={name} />
                            ))}
                          </tr>
                        </tbody>
                      </Lines>
                    </GridArea>
                    <GreyBar>
                      <BarToggle $gap={17}>
                        <Arrow $dir="down" $size={5} $long={8} $color="#000" />
                        <Mnemonic text="&Article" />
                      </BarToggle>
                      <BarState $color="#41629f">Création</BarState>
                    </GreyBar>
                    <ArticleForm />
                  </Marked>
                  <YellowBar>
                    <ArrowSlot>
                      <Arrow $dir="right" $size={6} $long={10} $color="#fff" />
                    </ArrowSlot>
                    Pied (ALPHA)
                  </YellowBar>
                </Sheet>
                <ScrollTrack>
                  <IconButton $w={14} $h={18} aria-label="Défiler vers le haut">
                    <Chevron up />
                  </IconButton>
                  <ScrollGap />
                  <ScrollThumb />
                  <IconButton $w={14} $h={17} aria-label="Défiler vers le bas">
                    <Chevron />
                  </IconButton>
                </ScrollTrack>
              </Scroller>

              <Actions>
                <IconButton aria-label="Dupliquer"><CopyIcon /></IconButton>
                <IconButton aria-label="Nouveau"><Circled plus color="#1e1e1e" /></IconButton>
                <IconButton aria-label="Supprimer"><Trash /></IconButton>
                <ActionSet $before={36} $gap={0}>
                  <IconButton aria-label="Valider">
                    <CheckCircle size={24} color="#1e1e1e" width={2} />
                  </IconButton>
                </ActionSet>
                <ActionSet $before={154} $gap={15}>
                  <IconButton aria-label="Imprimer"><Printer /></IconButton>
                  <IconButton $w={27} $h={24} aria-label="Imprimer et continuer"><Printer next /></IconButton>
                </ActionSet>
                <Mode>Création</Mode>
              </Actions>
            </Doc>
          </Work>
        </Column>
      </Body>

      <TaskBar>
        <Task $color="#4b3d70" $line="#404040" $gap={11}>
          <House />
          Accueil
        </Task>
        <Task $color="#1d9670" $line="#fff" $gap={10}>
          <Forklift />
          Livraison client
        </Task>
      </TaskBar>
      <Status>
        <StatusText>Base de données : LOCALHOST:D:\Analys\Atys\Database\Atys.gdb</StatusText>
        <Keys>
          <Key>CAPS</Key>
          <Key $on>NUM</Key>
          <Key>INS</Key>
        </Keys>
      </Status>
    </Shell>
  );
}
